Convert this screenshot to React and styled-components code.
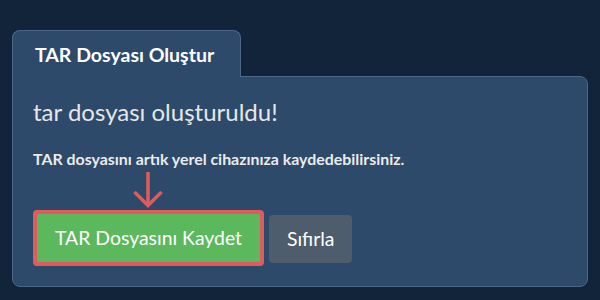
import React from "react";
import styled, { createGlobalStyle } from "styled-components";

const Global = createGlobalStyle`
  html, body { margin: 0; padding: 0; background: #11243a; }
  body { font-family: Lato, "Open Sans", sans-serif; color: #ebebeb; }
  * { box-sizing: border-box; }
`;

const Page = styled.div`
  width: 600px;
  height: 300px;
  padding: 30px 12px 0 12px;
  background: #11243a;
`;

const Tabs = styled.div`
  display: flex;
`;

const Tab = styled.div`
  position: relative;
  z-index: 1;
  width: 229px;
  height: 47px;
  margin-bottom: -1px;
  padding: 11.5px 0 0 22px;
  background: #2d4a6a;
  border: 1px solid #4d6887;
  border-bottom: none;
  border-radius: 8px 8px 0 0;
  font-weight: 700;
  font-size: 19.5px;
  line-height: 1.2;
  color: #ffffff;
  white-space: nowrap;
`;

const Panel = styled.div`
  position: relative;
  height: 211px;
  background: #2d4a6a;
  border: 1px solid #4d6887;
  border-radius: 0 8px 8px 8px;
  padding: 21px 20px 0 20px;
`;

const Heading = styled.h2`
  margin: 0;
  font-weight: 400;
  font-size: 24px;
  line-height: 1.2;
  color: #e6e6e6;
`;

const Note = styled.p`
  margin: 22.4px 0 0 0;
  font-weight: 700;
  font-size: 15.9px;
  line-height: 1.2;
  color: #ebebeb;
  white-space: nowrap;
`;

const Actions = styled.div`
  position: relative;
  display: flex;
  align-items: center;
  gap: 5px;
  margin-top: 41.6px;
`;

const Button = styled.button`
  height: ${(p) => (p.$highlight ? "56px" : "48px")};
  padding: 0 18px;
  margin-top: ${(p) => (p.$highlight ? "0" : "2px")};
  border: ${(p) => (p.$highlight ? "4px solid #e05c5c" : "none")};
  border-radius: 4px;
  background: ${(p) => p.$bg};
  color: #ffffff;
  font-family: Lato, "Open Sans", sans-serif;
  font-size: 19.4px;
  font-weight: 400;
  white-space: nowrap;
  cursor: pointer;
`;

const Arrow = styled.svg`
  position: absolute;
  left: 99.5px;
  top: -38px;
  width: 30px;
  height: 36px;
`;

export default function App() {
  return (
    <>
      <Global />
      <Page>
        <Tabs>
          <Tab>TAR Dosyası Oluştur</Tab>
        </Tabs>
        <Panel>
          <Heading>tar dosyası oluşturuldu!</Heading>
          <Note>TAR dosyasını artık yerel cihazınıza kaydedebilirsiniz.</Note>
          <Actions>
            <Arrow viewBox="0 0 30 36" fill="none" stroke="#e05c5c" strokeWidth="3.5">
              <line x1="15" y1="0" x2="15" y2="33" />
              <polyline points="1.5,20 15,33.5 28.5,20" />
            </Arrow>
            <Button $highlight $bg="#5cb85c">TAR Dosyasını Kaydet</Button>
            <Button $bg="#4e5d6c">Sıfırla</Button>
          </Actions>
        </Panel>
      </Page>
    </>
  );
}
